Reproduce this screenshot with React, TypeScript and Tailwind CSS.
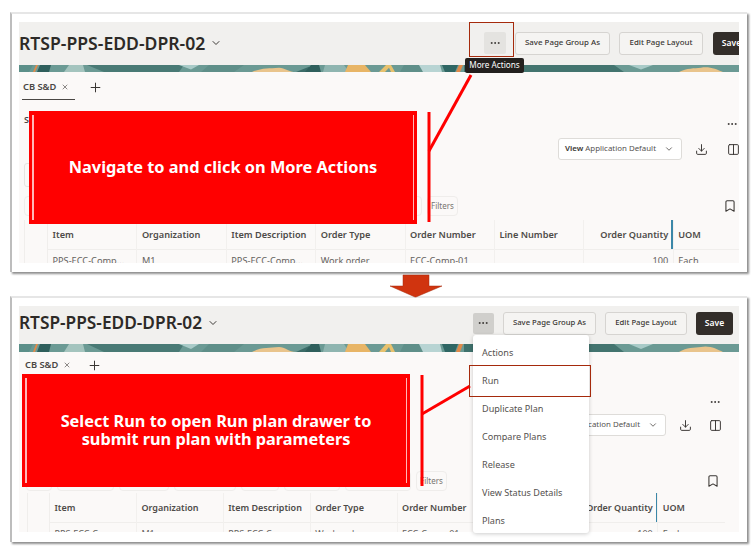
import type { ReactNode } from 'react'
import { ChevronDown, Plus, X, Download, Columns2, Bookmark, MoreHorizontal } from 'lucide-react'

const FONT = 'font-["Noto_Sans","Open_Sans",sans-serif]'

const COLUMNS = [
  { label: 'Item', value: 'PPS-ECC-Comp...' },
  { label: 'Organization', value: 'M1' },
  { label: 'Item Description', value: 'PPS-ECC-Comp...' },
  { label: 'Order Type', value: 'Work order' },
  { label: 'Order Number', value: 'ECC-Comp-01' },
  { label: 'Line Number', value: '' },
  { label: 'Order Quantity', value: '100', right: true },
  { label: 'UOM', value: 'Each', last: true },
]

const MENU = ['Actions', 'Run', 'Duplicate Plan', 'Compare Plans', 'Release', 'View Status Details', 'Plans']

// Decorative strip under the page header
function Banner({ h }: { h: number }) {
  return (
    <svg viewBox="0 0 720 8" preserveAspectRatio="none" className="block w-full shrink-0" style={{ height: h }}>
      <rect width="720" height="8" fill="#6b9a94" />
      <path d="M0 8 L0 0 L14 0 L10 8 Z" fill="#5c8f89" />
      <path d="M14 8 L17 0 L19 0 L16 8 Z" fill="#e08a4a" />
      <path d="M18 8 L21 0 L32 0 L30 8 Z" fill="#2f5f5c" />
      <path d="M45 8 L50 0 L64 0 L66 8 Z" fill="#a4c4be" />
      <path d="M68 0 L85 8 L160 8 L165 0 Z" fill="#497a75" />
      <path d="M160 0 L172 5 L180 0 Z" fill="#a9cbc8" />
      <path d="M182 8 L190 0 L225 0 L215 8 Z" fill="#5f8f89" />
      <path d="M233 8 C242 3 250 4 260 3 C266 3 270 8 277 8 Z" fill="#e9c48c" />
      <path d="M277 8 L290 2 L292 8 Z" fill="#3b6c68" />
      <path d="M286 8 L292 0 L300 0 L302 8 Z" fill="#2f5f5c" />
      <path d="M304 8 L306 0 L325 0 L330 8 Z" fill="#8fb5b0" />
      <path d="M326 8 L329 0 L346 0 L352 8 Z" fill="#e8b566" />
      <path d="M360 8 L367 0 L372 0 L376 8 L372 8 L370 3 L366 8 Z" fill="#e7c16d" />
      <path d="M381 8 L385 0 L402 0 L404 8 Z" fill="#5f8f89" />
      <path d="M400 0 L421 0 L423 8 L404 8 Z" fill="#b8d4d3" />
      <path d="M423 0 L439 0 L436 8 L426 8 Z" fill="#2f6663" />
      <path d="M440 0 L444 0 L441 8 L437 8 Z" fill="#e08a4a" />
      <path d="M445 0 L470 0 L470 8 L445 8 Z" fill="#3f716c" />
      <path d="M480 8 L490 0 L595 0 L605 8 Z" fill="#43746f" />
      <path d="M610 0 L622 5 L634 0 Z" fill="#a9cbc8" />
      <path d="M660 8 C668 3 675 4 682 3 C690 1 698 5 704 8 Z" fill="#e9c48c" />
    </svg>
  )
}

function Panel({ second, h, className }: { second?: boolean; h: number; className?: string }) {
  return (
    <div
      className={`flex flex-col border-t-2 border-l-2 border-t-[#e6e6e6] border-l-[#bdbdbd] bg-white pt-[8px] pr-[8px] pl-[7px] shadow-[2px_2px_2px_#8f8f8f] ${second ? 'pb-[10px]' : 'pb-[9px]'} ${className ?? ''}`}
      style={{ height: h }}
    >
      <div className="flex h-full min-h-0 flex-col overflow-hidden">
        <Header second={second} />
        <Banner h={second ? 8 : 7} />
        <Body second={second} />
      </div>
    </div>
  )
}

function Header({ second }: { second?: boolean }) {
  return (
    <div className={`flex shrink-0 items-center bg-[#f1f0ee] ${second ? 'h-[38px] pb-[4px]' : 'h-[43px] pb-[1px]'}`}>
      <span className={`font-semibold text-[#2d2a27] ${second ? 'text-[17.3px]' : 'text-[17.6px]'}`}>RTSP-PPS-EDD-DPR-02</span>
      <ChevronDown size={12} strokeWidth={2} className="ml-[5px] text-[#3d3a37]" />
      <div className={`ml-auto flex shrink-0 items-center ${second ? 'mr-[6px]' : '-mr-[11px]'}`}>
        <span className={`flex items-center justify-center rounded-[2px] text-[#3a3734] ${second ? 'h-[21px] w-[21px] bg-[#d0cfcc]' : 'h-[22px] w-[22px] bg-[#e4e3e0]'}`}>
          <MoreHorizontal size={12} strokeWidth={2} />
        </span>
        <span className={`ml-[9.5px] flex h-[23px] items-center justify-center rounded-[3px] border border-[#d6d4d1] bg-[#f5f4f2] font-medium text-[#3a3734] ${second ? 'w-[93px] text-[7.7px]' : 'w-[95px] text-[7.9px]'}`}>Save Page Group As</span>
        <span className={`ml-[9px] flex h-[23px] items-center justify-center rounded-[3px] border border-[#d6d4d1] bg-[#f5f4f2] font-medium text-[#3a3734] ${second ? 'w-[82px] text-[7.7px]' : 'w-[84px] text-[7.9px]'}`}>Edit Page Layout</span>
        <span className={`flex h-[23px] w-[37px] items-center justify-center rounded-[3px] bg-[#332e2a] text-[8.5px] font-semibold text-white ${second ? 'ml-[9px]' : 'ml-[10px]'}`}>Save</span>
      </div>
    </div>
  )
}

function Body({ second }: { second?: boolean }) {
  return (
    <div className="relative min-h-0 flex-1 bg-[#fbf9f8]">
      <div className={`flex items-center ${second ? 'h-[26px] pl-[6px]' : 'h-[30px] pl-[4px]'}`}>
        <span className="text-[9.3px] font-semibold text-[#4a4744]">CB S&amp;D</span>
        <X size={8} strokeWidth={2} className="ml-[5px] text-[#55524f]" />
        <Plus size={15} strokeWidth={1.6} className={second ? 'ml-[16px] text-[#3a3734]' : 'ml-[19px] text-[#3a3734]'} />
      </div>
      {!second && <div className="absolute top-[27px] left-[3px] h-[1px] w-[53px] bg-[#4a4744]" />}

      <div className={`flex h-[12px] items-center justify-between ${second ? 'mt-[18px] pr-[18px] pl-[8px]' : 'mt-[16px] pr-[1px] pl-[5px]'}`}>
        {second ? <span /> : <span className="-mt-[8px] text-[9px] leading-[12px] font-semibold text-[#4a4744]">S</span>}
        <MoreHorizontal size={12} strokeWidth={2} className="text-[#3a3734]" />
      </div>

      <div className={`flex items-center justify-end ${second ? 'mt-[6px] pr-[17px]' : 'mt-[8px] -mr-[1px]'}`}>
        <span className="flex h-[22px] w-[124px] items-center justify-center gap-[8px] rounded-[3px] border border-[#dedcd9] bg-white text-[7.9px] text-[#55524f]">
          <span><b className="font-semibold text-[#3a3734]">View</b> Application Default</span>
          <ChevronDown size={10} strokeWidth={2} />
        </span>
        <Download size={13} strokeWidth={1.8} className="ml-[13.5px] text-[#3a3734]" />
        <Columns2 size={13} strokeWidth={1.8} className={second ? 'ml-[17px] text-[#3a3734]' : 'ml-[19px] text-[#3a3734]'} />
      </div>

      {!second && <div className="mt-[3px] ml-[5px] h-[24px] w-[60px] rounded-[3px] border border-[#e6e4e1]" />}

      <div className={`flex h-[20px] items-center ${second ? 'mt-[35px] pr-[19px] pl-[7px]' : 'mt-[9px] pr-[2px] pl-[5px]'}`}>
        {[26, 57, 50, 62, 38, 56].map((w, i) => (
          <span key={i} className="mr-[5px] h-[20px] rounded-[4px] border border-[#efedeb]" style={{ width: w }} />
        ))}
        <span className="mr-[5px] h-[20px] rounded-[4px] border border-[#efedeb]" style={{ width: second ? 66 : 79 }} />
        <span className="flex h-[20px] w-[31px] items-center justify-center rounded-[4px] border border-[#efedeb] text-[8px] text-[#77746f]">Filters</span>
        <Bookmark size={14} strokeWidth={1.8} className="ml-auto text-[#3a3734]" />
      </div>

      <Table second={second} />
    </div>
  )
}

function Table({ second }: { second?: boolean }) {
  return (
    <div className={`flex whitespace-nowrap ${second ? 'mt-[2px] ml-[8px] mr-[14px] text-[9px]' : 'mt-[4px] ml-[5px] text-[9.2px]'}`}>
      <div className={`shrink-0 border-r border-l border-[#f0eeec] ${second ? 'w-[23px]' : 'w-[24px]'}`} />
      {COLUMNS.map((c) => (
        <div
          key={c.label}
          className={`border-r border-[#f2f0ee] last:border-r-0 ${c.last ? 'min-w-0 flex-1' : second ? 'w-[86.9px] shrink-0' : 'w-[89.4px] shrink-0'}`}
        >
          <div className={`relative flex h-[30px] items-center border-b border-[#f0eeec] px-[4.5px] font-semibold text-[#4e4b48] ${c.right ? 'justify-end' : ''}`}>
            {c.label}
            {c.right && <span className="absolute top-0 right-0 h-full w-[1.5px] bg-[#3b87a8]" />}
          </div>
          <div className={`flex h-[22px] items-center px-[4.5px] text-[#66635f] ${c.right ? 'justify-end' : ''}`}>{c.value}</div>
        </div>
      ))}
    </div>
  )
}

function Callout({ className, text }: { className: string; text: ReactNode }) {
  return (
    <div className={`absolute flex items-center justify-center bg-[#ff0000] text-center font-bold text-white ${className}`}>
      <span className="absolute top-[4px] bottom-[4px] left-[3px] w-[1.5px] bg-[#ffb8b8]" />
      <span className="absolute top-[4px] right-[3px] bottom-[4px] w-[1.5px] bg-[#ffb8b8]" />
      <div>{text}</div>
    </div>
  )
}

export default function App() {
  return (
    <div className={`relative h-[550px] w-[753px] overflow-hidden bg-white pt-[12px] pr-[6px] pl-[10px] ${FONT}`}>
      <Panel h={260} />
      <Panel second h={246} className="mt-[24px]" />

      {/* overlays: callouts, connectors, arrow, menu */}
      <Callout className="top-[111px] left-[29px] h-[113px] w-[388px] pb-[1px] text-[16.35px]" text="Navigate to and click on More Actions" />
      <Callout className="top-[374px] left-[22px] h-[113px] w-[388px] pb-[2px] text-[16.3px] leading-[18px]" text={<>Select Run to open Run plan drawer to<br />submit run plan with parameters</>} />

      <svg className="pointer-events-none absolute top-0 left-0" width="753" height="550">
        <path d="M429 112V222" stroke="#ff0000" strokeWidth="3" fill="none" />
        <path d="M429 151L471 75" stroke="#ff0000" strokeWidth="3" fill="none" />
        <path d="M422 375V486" stroke="#ff0000" strokeWidth="3" fill="none" />
        <path d="M422 414L470 386" stroke="#ff0000" strokeWidth="3" fill="none" />
        <path d="M403 275H429V286H442L416 297H415L390 286H403Z" fill="#d0340f" stroke="#a52a0c" strokeWidth="0.5" />
      </svg>

      <div className="absolute top-[22px] left-[469px] h-[35px] w-[45px] border border-[#a52a0c]" />
      <div className="absolute top-[58px] left-[465px] flex h-[15px] w-[59px] items-center justify-center rounded-[2px] bg-[#23201e] text-[8.2px] text-white">More Actions</div>

      <div className="absolute top-[335px] left-[473px] h-[198px] w-[116px] overflow-hidden rounded-[3px] bg-white pt-[4px] shadow-[0_1px_4px_rgba(0,0,0,0.2)]">
        {MENU.map((m) => (
          <div key={m} className="flex h-[28px] items-center pl-[9px] text-[9.1px] text-[#55524f]">{m}</div>
        ))}
      </div>
      <div className="absolute top-[365px] left-[469px] h-[32px] w-[122px] border border-[#a52a0c]" />
    </div>
  )
}
